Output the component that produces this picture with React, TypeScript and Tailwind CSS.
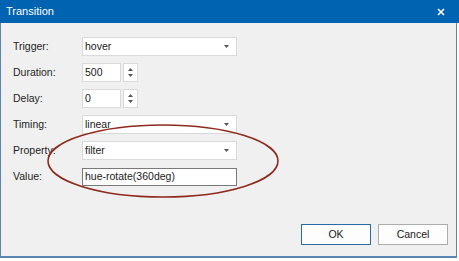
import React from 'react';

const font = { fontFamily: '"Liberation Sans", Arial, sans-serif' };

const Arrow = ({ up = false }: { up?: boolean }) => (
  <svg width="5" height="3" viewBox="0 0 5 3" className="block">
    <path d={up ? 'M0 3 L2.5 0 L5 3 Z' : 'M0 0 L5 0 L2.5 3 Z'} fill="#555" />
  </svg>
);

const Label = ({ text }: { text: string }) => (
  <div className="w-[69px] shrink-0 text-[10.5px] text-[#1e1e1e]">{text}</div>
);

const Combo = ({ value }: { value: string }) => (
  <div className="flex h-[19px] w-[155px] items-center justify-between border border-[#d9d9d9] bg-white pl-[2px] pr-[7px] text-[10.5px] text-[#1a1a1a]">
    <span>{value}</span>
    <Arrow />
  </div>
);

const Spin = ({ value }: { value: string }) => (
  <div className="flex gap-[2px]">
    <div className="flex h-[19px] w-[39px] items-center border border-[#d9d9d9] bg-white pl-[2px] text-[10.5px] text-[#1a1a1a]">
      {value}
    </div>
    <div className="flex h-[19px] w-[15px] flex-col items-center justify-center gap-[3px] border border-[#d9d9d9] bg-white">
      <Arrow up />
      <Arrow />
    </div>
  </div>
);

const Row = ({ label, children }: { label: string; children: React.ReactNode }) => (
  <div className="flex h-[19px] items-center">
    <Label text={label} />
    {children}
  </div>
);

export default function App() {
  return (
    <div className="h-[261px] w-[459px] bg-white" style={font}>
      {/* Title bar */}
      <div className="flex h-[23px] w-[459px] items-center justify-between bg-[#0063b1] pl-[6px] pr-[14px]">
        <span className="text-[11px] text-white">Transition</span>
        <svg width="8" height="8" viewBox="0 0 8 8">
          <path d="M1 1 L7 7 M7 1 L1 7" stroke="white" strokeWidth="1.6" />
        </svg>
      </div>

      {/* Body */}
      <div className="relative flex h-[235px] w-[457px] flex-col justify-between border-x border-b-2 border-[#5a86b2] bg-[#f0f0f0] pb-[11px] pl-[12px] pr-[8px] pt-[14px]">
        <div className="flex flex-col gap-[7px]">
          <Row label="Trigger:">
            <Combo value="hover" />
          </Row>
          <Row label="Duration:">
            <Spin value="500" />
          </Row>
          <Row label="Delay:">
            <Spin value="0" />
          </Row>
          <Row label="Timing:">
            <Combo value="linear" />
          </Row>
          <Row label="Property:">
            <Combo value="filter" />
          </Row>
          <Row label="Value:">
            <div className="flex h-[18px] w-[155px] items-center border border-[#7a7a7a] bg-white pl-[2px] text-[10.5px] text-[#1a1a1a]">
              hue-rotate(360deg)
            </div>
          </Row>
        </div>

        <div className="flex justify-end gap-[7px]">
          <button className="h-[21px] w-[70px] border border-[#2a6aa8] bg-[#fdfdfd] text-[10.5px] text-[#1a1a1a]">
            OK
          </button>
          <button className="h-[21px] w-[70px] border border-[#adadad] bg-[#fdfdfd] text-[10.5px] text-[#1a1a1a]">
            Cancel
          </button>
        </div>

        {/* Annotation ellipse */}
        <svg className="pointer-events-none absolute left-0 top-0" width="457" height="235">
          <ellipse cx="162" cy="138" rx="115" ry="36" fill="none" stroke="#8e2a1e" strokeWidth="1.6" />
        </svg>
      </div>
    </div>
  );
}
